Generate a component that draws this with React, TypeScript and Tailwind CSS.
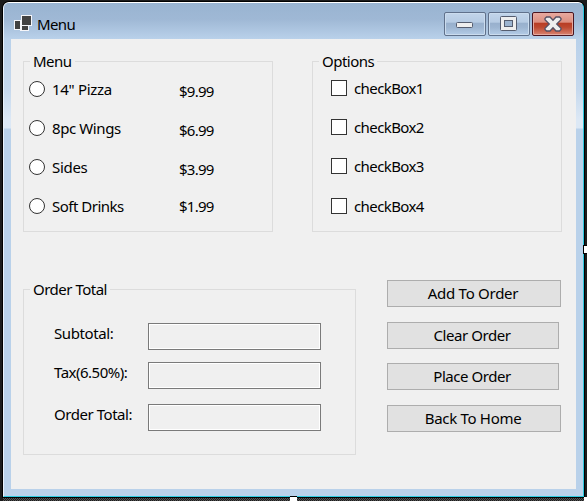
import type { ReactNode } from "react";

const menuItems = [
  { name: '14" Pizza', price: "$9.99", nameCls: "tracking-[-0.3px]", priceCls: "pt-[5px]" },
  { name: "8pc Wings", price: "$6.99", nameCls: "tracking-[-0.4px]", priceCls: "pt-[5px]" },
  { name: "Sides", price: "$3.99", nameCls: "tracking-[-0.3px]", priceCls: "pt-[5px]" },
  { name: "Soft Drinks", price: "$1.99", nameCls: "tracking-[-0.5px]", priceCls: "pt-[3px]" },
];

const options = [
  { name: "checkBox1", row: "h-[39px]" },
  { name: "checkBox2", row: "h-[39px]" },
  { name: "checkBox3", row: "h-[40px]" },
  { name: "checkBox4", row: "h-[39px]" },
];

const totals = [
  { label: "Subtotal:", row: "mb-3 tracking-[-0.4px]" },
  { label: "Tax(6.50%):", row: "mb-[15px] tracking-[-0.5px]" },
  { label: "Order Total:", row: "tracking-[-0.45px]" },
];

const actions = [
  { label: "Add To Order", cls: "w-[174px] mb-[15px] tracking-[-0.27px]" },
  { label: "Clear Order", cls: "w-[172px] mb-[14px] tracking-[-0.45px]" },
  { label: "Place Order", cls: "w-[172px] mb-[15px] tracking-[-0.45px]" },
  { label: "Back To Home", cls: "w-[174px] tracking-[-0.3px]" },
];

function Group({ title, className, children }: { title: string; className: string; children: ReactNode }) {
  return (
    <section className={`flex flex-col items-start border border-[#dcdcdc] ${className}`}>
      <h2 className="-mt-[11px] ml-[6px] h-[20px] bg-[#f0f0f0] px-[3px] leading-[21px] tracking-[-0.5px]">{title}</h2>
      {children}
    </section>
  );
}

function Caption({ danger = false, children }: { danger?: boolean; children: ReactNode }) {
  return (
    <button
      className={`flex h-6 w-[42px] items-center justify-center rounded-[2px] border ${
        danger
          ? "border-[#4a1520] bg-[linear-gradient(#e8a99f_0%,#dc8f80_42%,#b83c24_46%,#bd4930_65%,#d98472_100%)] shadow-[inset_0_0_0_1px_#e5a99f]"
          : "border-[#60718b] bg-[linear-gradient(#c2d5ea_0%,#b6cbe3_42%,#98b0cd_46%,#9db5d1_65%,#b4cce7_100%)] shadow-[inset_0_0_0_1px_#cbdcee]"
      }`}
    >
      {children}
    </button>
  );
}

function FormIcon() {
  return (
    <svg width="18" height="17" viewBox="0 0 18 17" shapeRendering="crispEdges">
      <path d="M0 5h7v10H0z M7 0h11v11H7z M6 10h9v6H6z" fill="#f5f6fa" />
      <path d="M1 6h5v8H1z M8 1h9v9H8z M8 11h6v4H8z" fill="#424242" />
    </svg>
  );
}

export default function App() {
  return (
    <div className="relative h-[501px] w-[587px] overflow-hidden bg-[#1b1b1b] pl-[3px] pt-[2px] font-['Noto_Sans','Segoe_UI',sans-serif] text-[15px] text-black">
      <main className="flex h-[495px] w-[581px] flex-col rounded-t-[6px] border-l border-t border-b border-r border-l-[#e8f1fb] border-t-white border-b-[#2bc8de] border-r-[#2bc8de] bg-[#b9d1ea] shadow-[0_0_0_1px_#000]">
        <header className="flex h-9 shrink-0 items-start rounded-t-[5px] bg-[linear-gradient(#99b4d1_0%,#9fb8d5_45%,#b9d1ea_100%)] pl-[10px] pr-[9px]">
          <div className="pt-3"><FormIcon /></div>
          <h1 className="ml-[5px] mt-[11px] leading-[20px] tracking-[-0.6px]">Menu</h1>
          <div className="ml-auto mt-[9px] flex gap-[2px]">
            <Caption>
              <svg className="mr-px mt-[2px]" width="17" height="6" viewBox="0 0 17 6">
                <rect x="0.5" y="0.5" width="16" height="5" rx="1" fill="#eee" stroke="#555d6f" />
              </svg>
            </Caption>
            <Caption>
              <svg className="mb-px mr-px" width="17" height="15" viewBox="0 0 17 15">
                <rect x="0.5" y="0.5" width="16" height="14" rx="1" fill="#eee" stroke="#555d6f" />
                <rect x="4.5" y="4.5" width="8" height="6" fill="#9cb4d0" stroke="#555d6f" />
              </svg>
            </Caption>
            <Caption danger>
              <svg width="18" height="16" viewBox="0 0 18 16">
                <path d="M1 2.5 2.5 1H6L9 4.300 12 1h3.500L17 2.500v1.200L12.700 8l4.300 4.300v1.200L15.500 15H12L9 11.700 6 15H2.500L1 13.500v-1.200L5.300 8 1 3.700z" fill="#eee" stroke="#555064" strokeWidth="1.3" />
              </svg>
            </Caption>
          </div>
        </header>
        <div className="bg-[linear-gradient(#b9d1ea_0px,#c5d8ed_50px,#dce8f5_80px,#dce8f5_89px,#b9d1ea_90px)] px-[7px] pb-[7px]">
          <div className="h-[450px] w-[565px] bg-[#f0f0f0] pl-3 pt-[22px]">
            <div className="flex gap-[39px]">
              <Group title="Menu" className="h-[171px] w-[250px]">
                <div className="w-full pl-[5px]">
                  {menuItems.map((item) => (
                    <label key={item.name} className="flex h-[39px] items-start">
                      <span className="mt-[10px] size-4 shrink-0 rounded-full border border-[#333] bg-white" />
                      <span className={`ml-[7px] mt-[8px] w-[127px] whitespace-nowrap leading-[20px] ${item.nameCls}`}>{item.name}</span>
                      <span className={`mt-[5px] leading-[20px] tracking-[-0.75px] ${item.priceCls}`}>{item.price}</span>
                    </label>
                  ))}
                </div>
              </Group>
              <Group title="Options" className="h-[171px] w-[250px]">
                <div className="pl-[18px]">
                  {options.map((option) => (
                    <label key={option.name} className={`flex items-start ${option.row}`}>
                      <span className="mt-[9px] size-4 shrink-0 border border-[#333] bg-white" />
                      <span className="ml-[7px] mt-[7px] leading-[20px] tracking-[-0.6px]">{option.name}</span>
                    </label>
                  ))}
                </div>
              </Group>
            </div>
            <div className="mt-12 flex gap-[31px]">
              <Group title="Order Total" className="mt-[9px] h-[166px] w-[333px]">
                <div className="mt-6 pl-[30px]">
                  {totals.map((total) => (
                    <label key={total.label} className={`flex h-[27px] items-start ${total.row}`}>
                      <span className="w-[94px] whitespace-nowrap leading-[20px]">{total.label}</span>
                      <span className="h-[27px] w-[173px] border border-[#7a7a7a] bg-[#f0f0f0] shadow-[inset_0_0_0_1px_#fff]" />
                    </label>
                  ))}
                </div>
              </Group>
              <div className="flex flex-col items-start">
                {actions.map((action) => (
                  <button key={action.label} className={`h-[27px] border border-[#adadad] bg-[#e1e1e1] pr-[2px] leading-[25px] ${action.cls}`}>
                    {action.label}
                  </button>
                ))}
              </div>
            </div>
          </div>
        </div>
      </main>
      <div className="mt-[1px] h-[3px] w-full bg-[repeating-conic-gradient(#1b1b1b_0_25%,#555_0_50%)] bg-[length:2px_2px]" />
      <span className="absolute left-[583px] top-[245px] h-[9px] w-1 border-y border-l border-black bg-white" />
      <span className="absolute left-[290px] top-[496px] h-[5px] w-[7px] border-t border-black bg-white" />
      <span className="absolute left-[584px] top-[497px] h-1 w-[3px] bg-white" />
    </div>
  );
}
